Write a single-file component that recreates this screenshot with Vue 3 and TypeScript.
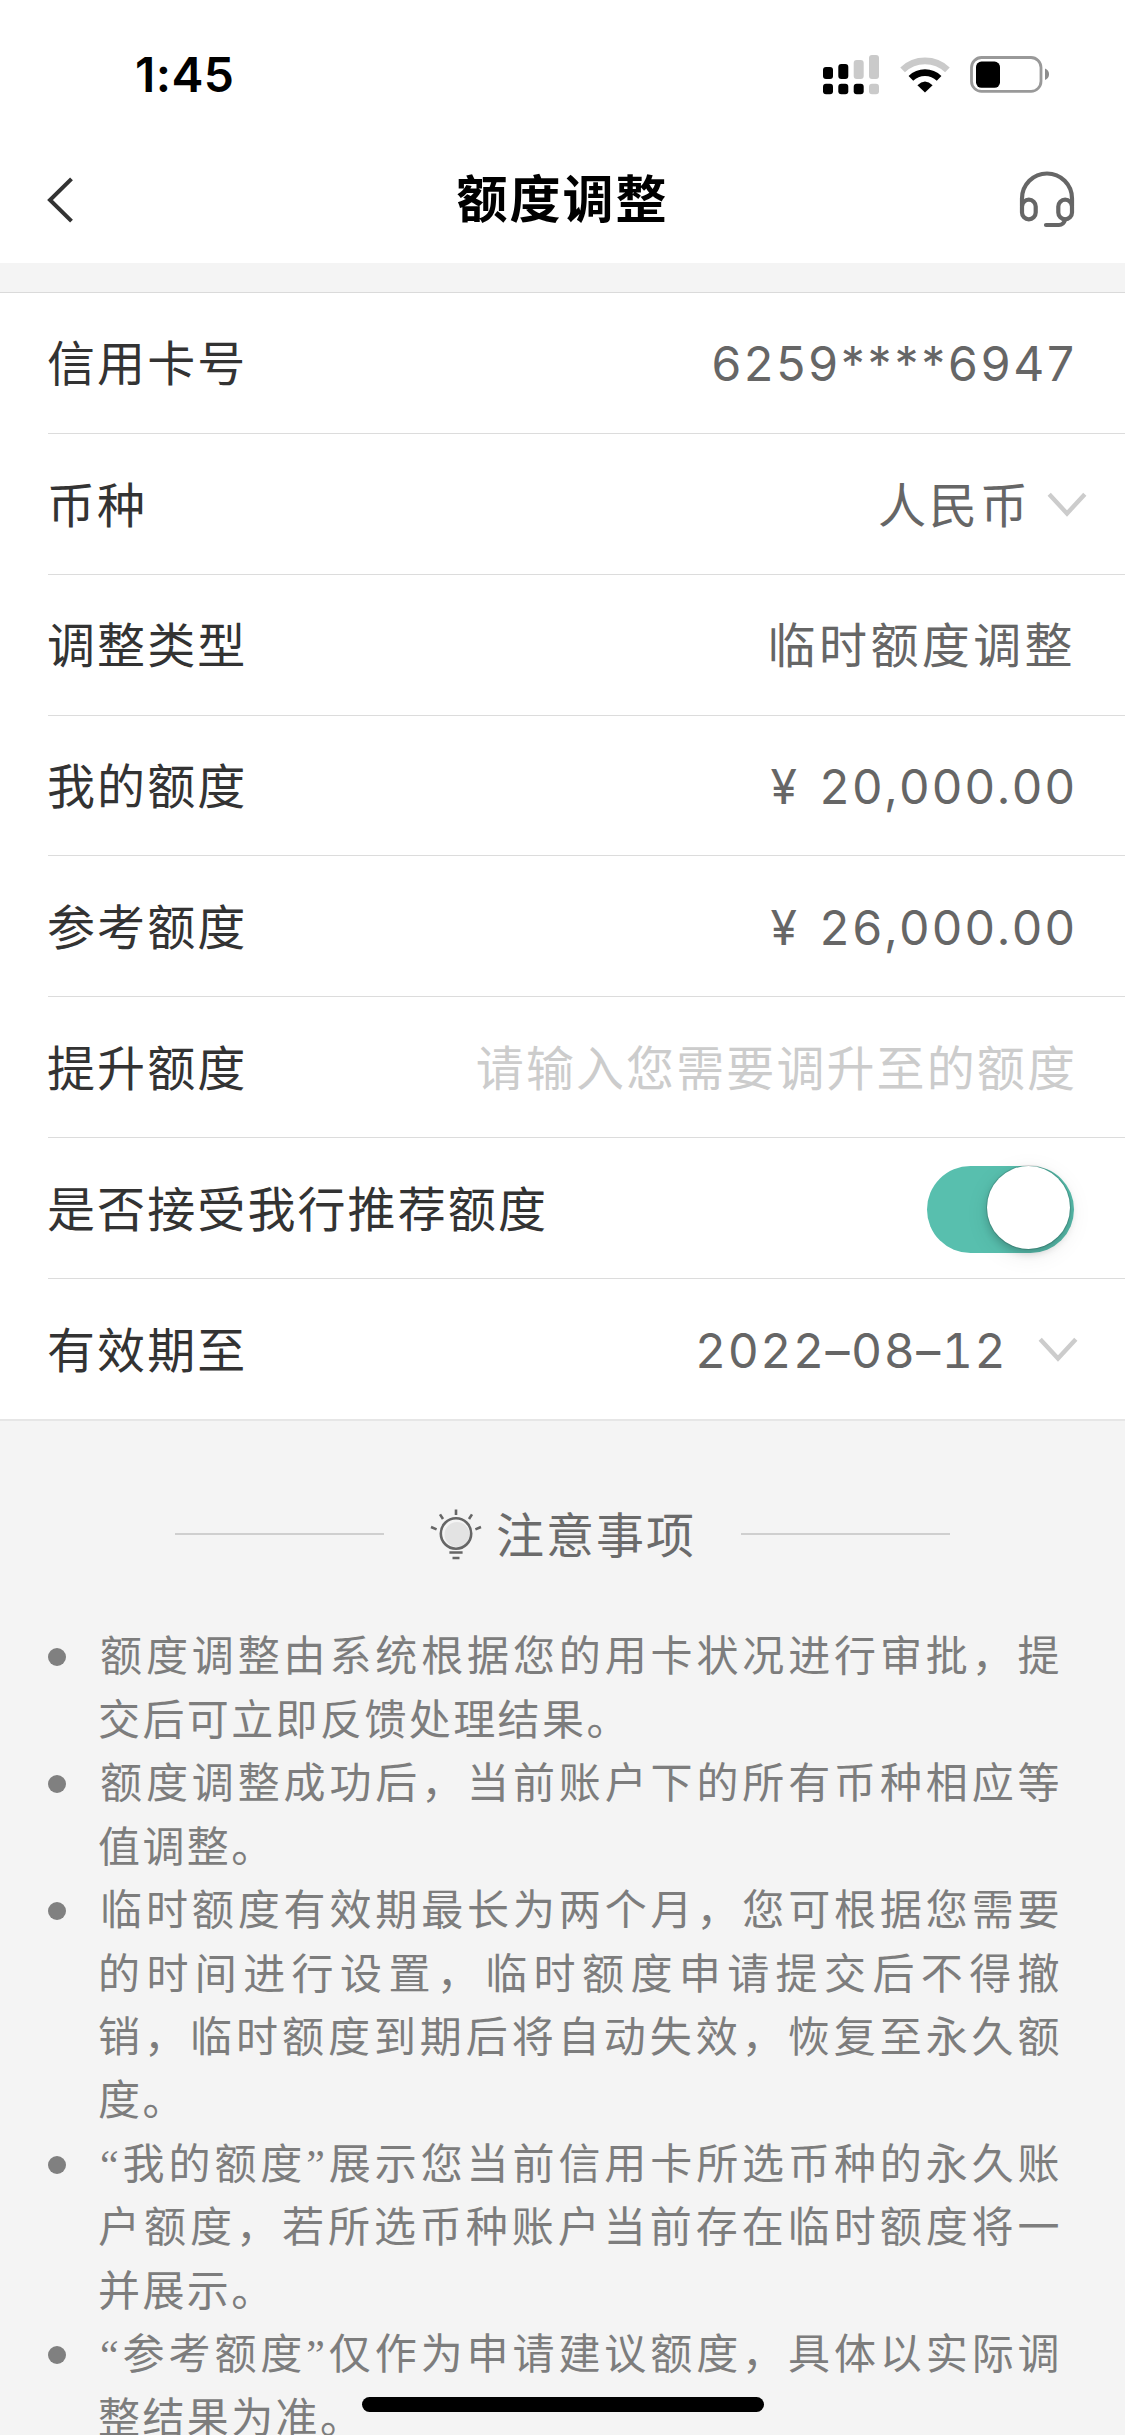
<script setup lang="ts">
type RowKind = 'text' | 'card' | 'amount' | 'select' | 'input' | 'switch' | 'date'

interface Row {
  label: string
  kind: RowKind
  value?: string
}

const rows: Row[] = [
  { label: '信用卡号', kind: 'card', value: '6259****6947' },
  { label: '币种', kind: 'select', value: '人民币' },
  { label: '调整类型', kind: 'text', value: '临时额度调整' },
  { label: '我的额度', kind: 'amount', value: '¥ 20,000.00' },
  { label: '参考额度', kind: 'amount', value: '¥ 26,000.00' },
  { label: '提升额度', kind: 'input', value: '请输入您需要调升至的额度' },
  { label: '是否接受我行推荐额度', kind: 'switch' },
  { label: '有效期至', kind: 'date', value: '2022–08–12' },
]

const notes: string[] = [
  '额度调整由系统根据您的用卡状况进行审批，提交后可立即反馈处理结果。',
  '额度调整成功后，当前账户下的所有币种相应等值调整。',
  '临时额度有效期最长为两个月，您可根据您需要的时间进行设置，临时额度申请提交后不得撤销，临时额度到期后将自动失效，恢复至永久额度。',
  '“我的额度”展示您当前信用卡所选币种的永久账户额度，若所选币种账户当前存在临时额度将一并展示。',
  '“参考额度”仅作为申请建议额度，具体以实际调整结果为准。',
]
</script>

<template>
  <div class="page" lang="zh-CN">
    <header class="header">
      <div class="status">
        <span class="time">1:45</span>
        <div class="status-icons">
          <svg class="signal" width="56" height="40" viewBox="0 0 56 40">
            <g fill="#000">
              <rect x="0" y="12" width="10" height="12" rx="3" />
              <rect x="15.3" y="9" width="10" height="15" rx="3" />
              <rect x="0" y="28.7" width="10" height="10.6" rx="3" />
              <rect x="15.3" y="28.7" width="10" height="10.6" rx="3" />
              <rect x="30.7" y="28.7" width="10" height="10.6" rx="3" />
            </g>
            <g fill="#cacaca">
              <rect x="30.7" y="5" width="10" height="19" rx="3" />
              <rect x="46" y="0" width="10" height="24" rx="3" />
              <rect x="46" y="28.7" width="10" height="10.6" rx="3" />
            </g>
          </svg>
          <svg class="wifi" width="50" height="36" viewBox="0 0 50 36">
            <g fill="none" stroke-width="6.7">
              <path d="M2.6 12.9A32.4 32.4 0 0 1 47.4 12.9" stroke="#cacaca" />
              <path d="M10.9 21.4A20.3 20.3 0 0 1 39.1 21.4" stroke="#000" />
            </g>
            <path d="M25 35.4L17.4 28.2Q25 20.8 32.6 28.2Z" fill="#000" />
          </svg>
          <svg class="battery" width="80" height="37" viewBox="0 0 80 37">
            <rect x="1.5" y="1.5" width="69.5" height="33.8" rx="10" fill="none" stroke="#999" stroke-width="2.8" />
            <rect x="6" y="5.6" width="24" height="26.2" rx="5.5" fill="#000" />
            <path d="M75 12.6Q79 14 79 18.3Q79 22.6 75 24Z" fill="#8c8c8c" />
          </svg>
        </div>
      </div>
      <nav class="nav">
        <svg class="back" width="28" height="48" viewBox="0 0 28 48">
          <path d="M25.5 2.8L4 24L25.5 45.2" fill="none" stroke="#333" stroke-width="4" />
        </svg>
        <h1 class="title">额度调整</h1>
        <svg class="service" width="56" height="58" viewBox="0 0 56 58">
          <g fill="none" stroke="#666" stroke-width="4.2" stroke-linecap="round">
            <path d="M3 35V27.5A25 25 0 0 1 53 27.5V35" />
            <rect x="3" y="28.7" width="13.7" height="19.6" rx="6.85" />
            <rect x="39.3" y="28.7" width="13.7" height="19.6" rx="6.85" />
            <path d="M46.2 48.5Q44.5 54 40 54H27" />
          </g>
        </svg>
      </nav>
    </header>

    <section class="form">
      <div v-for="row in rows" :key="row.label" class="row" :class="`row-${row.kind}`">
        <span class="label">{{ row.label }}</span>
        <span v-if="row.kind === 'switch'" class="switch"><i class="knob"></i></span>
        <span v-else class="value">{{ row.value }}</span>
        <svg v-if="row.kind === 'select' || row.kind === 'date'" class="chevron" width="40" height="26" viewBox="0 0 40 26">
          <path d="M2.2 2.2L20 21.5L37.8 2.2" fill="none" stroke="#ccc" stroke-width="4.4" />
        </svg>
      </div>
    </section>

    <section class="notice">
      <div class="notice-head">
        <i class="rule"></i>
        <svg class="bulb" width="52" height="52" viewBox="0 0 52 52">
          <circle cx="27" cy="25.5" r="12.5" fill="#e3e3e3" />
          <g fill="none" stroke="#666" stroke-width="2.6">
            <circle cx="26" cy="24.5" r="15.2" />
            <path d="M19.4 43.5H32.6M22.5 49H29.5M26 .5V6M10 5.4L13 10M42 5.4L39 10M1 18L6.6 20.4M51 18L45.4 20.4" />
          </g>
        </svg>
        <h2 class="notice-title">注意事项</h2>
        <i class="rule"></i>
      </div>
      <ul class="notes">
        <li v-for="note in notes" :key="note" class="note">
          <i class="dot"></i>
          <p class="note-text">{{ note }}</p>
        </li>
      </ul>
    </section>
    <div class="home-indicator"></div>
  </div>
</template>

<style>
body {
  margin: 0;
  background: #f4f4f4;
}
</style>

<style scoped>
.page {
  position: relative;
  width: 1125px;
  height: 2435px;
  overflow: hidden;
  background: #f4f4f4;
  font-family: Inter, 'Noto Sans CJK SC', sans-serif;
}
.header {
  height: 263px;
  background: #fff;
}
.status {
  display: flex;
  justify-content: space-between;
  height: 137px;
  padding: 0 76px 0 135px;
}
.time {
  margin-top: 45px;
  font-size: 48px;
  line-height: 60px;
  font-weight: 600;
  letter-spacing: 0.4px;
  color: #000;
}
.status-icons {
  display: flex;
  align-items: flex-start;
  padding-top: 55px;
}
.wifi {
  margin: 1.5px 20px 0 21px;
}
.battery {
  margin-top: 1px;
  margin-right: -1px;
}
.nav {
  display: flex;
  align-items: center;
  justify-content: space-between;
  height: 126px;
  padding: 0 50px 0 46px;
}
.title {
  margin: 0 0 0 32px;
  font-size: 51px;
  line-height: 74px;
  font-weight: 700;
  letter-spacing: 2px;
  color: #000;
}
.form {
  margin-top: 29px;
  border-top: 1px solid #dadada;
  border-bottom: 2px solid #e6e6e6;
  background: #fff;
}
.row {
  display: flex;
  align-items: center;
  box-sizing: border-box;
  height: 140.85px;
  margin-left: 48px;
  padding: 4px 48px 0 0;
  border-bottom: 1px solid #dcdcdc;
}
.row:last-child {
  height: 140.2px;
  border-bottom: 0;
}
.label {
  flex: 1;
  margin-left: -1px;
  font-size: 48px;
  line-height: 70px;
  letter-spacing: 2.1px;
  color: #333;
}
.value {
  font-size: 48px;
  line-height: 70px;
  letter-spacing: 2.1px;
  color: #666;
}
.row-card .value,
.row-amount .value,
.row-date .value {
  font-weight: 390;
}
.row-card {
  padding-top: 2px;
}
.row-card .value {
  letter-spacing: 2.8px;
}
.row-amount .value {
  font-variant-numeric: tabular-nums;
  letter-spacing: 1.6px;
  word-spacing: 6px;
}
.row-date .value {
  font-variant-numeric: tabular-nums;
  letter-spacing: 1.5px;
}
.row-text .value {
  letter-spacing: 3.4px;
}
.row-select .value {
  letter-spacing: 3px;
}
.row-text {
  padding: 3px 49px 0 0;
}
.row-input .value {
  color: #ccc;
}
.row-select {
  padding: 4px 38px 0 0;
}
.row-select .chevron {
  margin: -2px 0 0 16px;
}
.row-date {
  padding-right: 47px;
}
.row-date .chevron {
  margin: -2px 0 0 31px;
}
.switch {
  box-sizing: border-box;
  width: 147px;
  height: 87px;
  margin: 0 3px 0 0;
  border-radius: 44px;
  background: #58bfae;
}
.knob {
  display: block;
  width: 83px;
  height: 83px;
  margin-left: 60px;
  border-radius: 50%;
  background: #fff;
  box-shadow: 0 0 0 1px rgba(0, 0, 0, 0.14), 0 4px 8px rgba(0, 0, 0, 0.2), 0 6px 24px rgba(0, 0, 0, 0.08);
}
.notice-head {
  display: flex;
  align-items: center;
  justify-content: center;
  height: 70px;
  margin-top: 78px;
}
.rule {
  width: 209px;
  height: 2px;
  background: #cfcfcf;
}
.bulb {
  margin: 2px 0 0 46px;
}
.notice-title {
  margin: 3px 45px 0 14px;
  font-size: 48px;
  line-height: 70px;
  font-weight: 400;
  letter-spacing: 2px;
  color: #6b6b6b;
}
.notes {
  margin: 57px 0 0;
  padding: 0;
  list-style: none;
}
.note {
  display: flex;
  padding: 0 63px 0 48px;
}
.dot {
  flex: none;
  width: 18px;
  height: 18px;
  margin: 22px 32px 0 0;
  border-radius: 50%;
  background: #808080;
}
.note-text {
  flex: 1;
  margin: 0;
  font-family: 'Liberation Serif', 'Noto Sans CJK SC', sans-serif;
  font-size: 42px;
  line-height: 63.48px;
  letter-spacing: 2.4px;
  text-align: justify;
  text-indent: 2px;
  color: #7d7d7d;
}
.home-indicator {
  position: absolute;
  left: 362px;
  bottom: 23px;
  width: 402px;
  height: 15px;
  border-radius: 8px;
  background: #000;
}
</style>
